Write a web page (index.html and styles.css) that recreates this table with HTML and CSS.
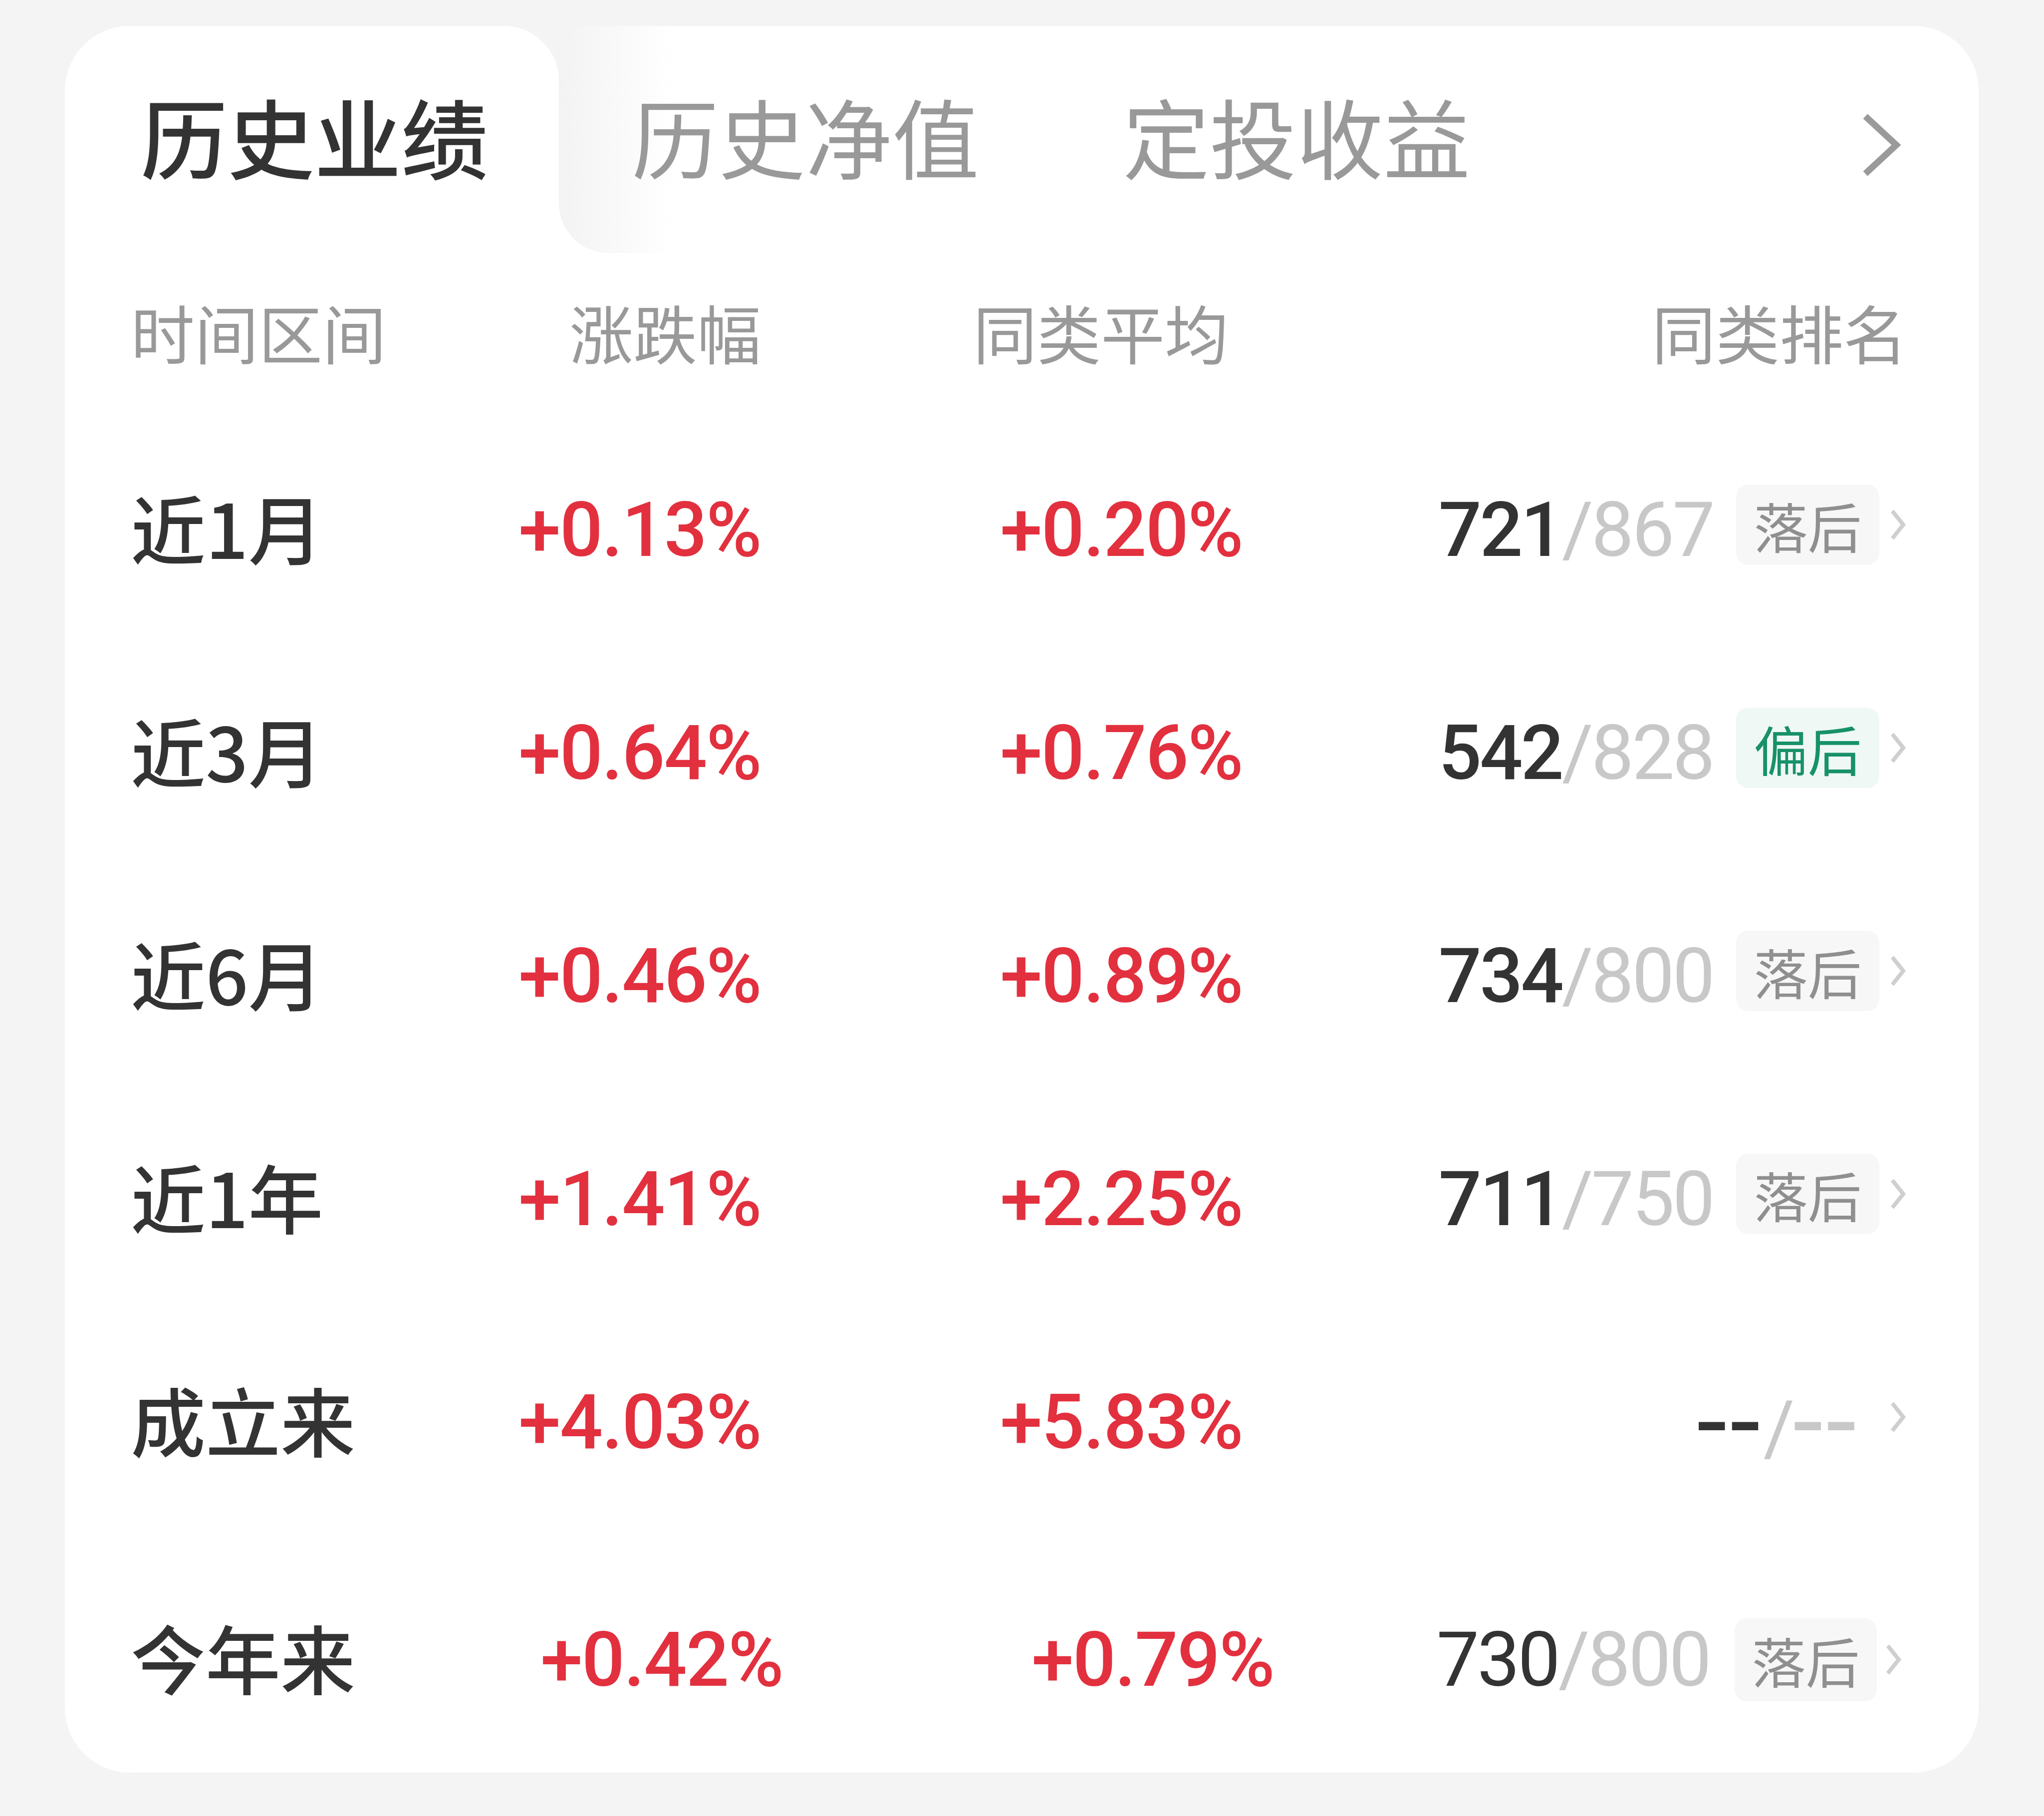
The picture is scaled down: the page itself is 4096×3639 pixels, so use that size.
FILE: index.html
```html
<!DOCTYPE html>
<html lang="zh-CN">
<head>
<meta charset="utf-8">
<title>历史业绩</title>
<link rel="stylesheet" href="styles.css">
</head>
<body>
<div class="card">
  <div class="tabs">
    <div class="tab tab-active"><span class="tab-text">历史业绩</span></div>
    <div class="tab-rest">
      <div class="tab tab-text">历史净值</div>
      <div class="tab tab-text">定投收益</div>
      <svg class="tab-more" width="82" height="131" viewBox="0 0 82 131"><polyline points="8,8 70,65.5 8,123" fill="none" stroke="#9a9a9a" stroke-width="13"/></svg>
    </div>
  </div>
  <div class="table">
    <div class="row row-head">
      <div class="c1">时间区间</div>
      <div class="c2">涨跌幅</div>
      <div class="c3 head-avg">同类平均</div>
      <div class="c4">同类排名</div>
    </div>
    <div class="row">
      <div class="c1 label">近1月</div>
      <div class="c2 up">+0.13%</div>
      <div class="c3 up">+0.20%</div>
      <div class="c4"><span class="rank"><span class="mine">721</span><span class="total">/867</span></span><span class="badge">落后</span><svg class="more" width="37" height="67" viewBox="0 0 37 67"><polyline points="7,6 29,33.5 7,61" fill="none" stroke="#cfcfcf" stroke-width="8"/></svg></div>
    </div>
    <div class="row">
      <div class="c1 label">近3月</div>
      <div class="c2 up">+0.64%</div>
      <div class="c3 up">+0.76%</div>
      <div class="c4"><span class="rank"><span class="mine">542</span><span class="total">/828</span></span><span class="badge badge-green">偏后</span><svg class="more" width="37" height="67" viewBox="0 0 37 67"><polyline points="7,6 29,33.5 7,61" fill="none" stroke="#cfcfcf" stroke-width="8"/></svg></div>
    </div>
    <div class="row">
      <div class="c1 label">近6月</div>
      <div class="c2 up">+0.46%</div>
      <div class="c3 up">+0.89%</div>
      <div class="c4"><span class="rank"><span class="mine">734</span><span class="total">/800</span></span><span class="badge">落后</span><svg class="more" width="37" height="67" viewBox="0 0 37 67"><polyline points="7,6 29,33.5 7,61" fill="none" stroke="#cfcfcf" stroke-width="8"/></svg></div>
    </div>
    <div class="row">
      <div class="c1 label">近1年</div>
      <div class="c2 up">+1.41%</div>
      <div class="c3 up">+2.25%</div>
      <div class="c4"><span class="rank"><span class="mine">711</span><span class="total">/750</span></span><span class="badge">落后</span><svg class="more" width="37" height="67" viewBox="0 0 37 67"><polyline points="7,6 29,33.5 7,61" fill="none" stroke="#cfcfcf" stroke-width="8"/></svg></div>
    </div>
    <div class="row">
      <div class="c1 label">成立来</div>
      <div class="c2 up">+4.03%</div>
      <div class="c3 up">+5.83%</div>
      <div class="c4"><span class="rank rank-empty"><span class="mine dash">--</span><span class="total">/<span class="dash">--</span></span></span><svg class="more" width="37" height="67" viewBox="0 0 37 67"><polyline points="7,6 29,33.5 7,61" fill="none" stroke="#cfcfcf" stroke-width="8"/></svg></div>
    </div>
    <div class="row row-last">
      <div class="c1 label">今年来</div>
      <div class="c2 up">+0.42%</div>
      <div class="c3 up">+0.79%</div>
      <div class="c4"><span class="rank"><span class="mine mine-light">730</span><span class="total">/800</span></span><span class="badge">落后</span><svg class="more" width="37" height="67" viewBox="0 0 37 67"><polyline points="7,6 29,33.5 7,61" fill="none" stroke="#cfcfcf" stroke-width="8"/></svg></div>
    </div>
  </div>
</div>
</body>
</html>
```

FILE: styles.css
```css
html, body {
  margin: 0;
  background: #f4f4f4;
}

body {
  padding: 52px 131px 87px 130px;
  font-family: "Noto Sans CJK SC", "Noto Sans", sans-serif;
}

.card {
  background: #fff;
  border-radius: 130px;
  overflow: hidden;
  height: 3500px;
  display: flex;
  flex-direction: column;
}

/* ---------- tabs ---------- */
.tabs {
  flex: none;
  display: flex;
  height: 455px;
  background: linear-gradient(#f4f4f4, #f4f4f4) top left / 100% 50% no-repeat, #fff;
}

.tab {
  font-size: 174px;
  line-height: 1;
  color: #999;
  font-weight: 400;
  white-space: nowrap;
}

.tab-text {
  padding-bottom: 20px;
}

.tab-active {
  width: 990px;
  box-sizing: border-box;
  padding-left: 152px;
  display: flex;
  align-items: center;
  background: #fff;
  border-top-right-radius: 110px;
  color: #333;
  font-weight: 500;
}

.tab-rest {
  flex: 1;
  display: flex;
  align-items: center;
  gap: 288px;
  padding-left: 146px;
  background: linear-gradient(90deg, #f3f3f3 0, #fff 230px);
  border-bottom-left-radius: 100px;
}

.tab-more {
  margin-left: auto;
  margin-right: 153px;
  margin-top: 21px;
}

/* ---------- table ---------- */
.table {
  flex: 1;
  display: flex;
  flex-direction: column;
  padding: 0 143px 0 132px;
}

.row {
  flex: none;
  display: flex;
  align-items: center;
  height: 447px;
}

.row-head {
  height: 331px;
  font-size: 128px;
  line-height: 1;
  color: #999;
}

.row-head > div {
  padding-bottom: 16px;
}

.c1 { width: 738px; }
.c2 { width: 525px; text-align: right; }
.c3 { width: 965px; text-align: right; }
.c4 {
  flex: 1;
  display: flex;
  justify-content: flex-end;
  align-items: center;
}

.head-avg { box-sizing: border-box; padding-right: 28px; }

.label {
  font-size: 150px;
  line-height: 1;
  color: #333;
  font-weight: 500;
  padding-bottom: 14px;
}

.up {
  font-family: Roboto, "Liberation Sans", sans-serif;
  font-size: 152px;
  line-height: 1;
  font-weight: 500;
  color: #e2303e;
  letter-spacing: -2px;
}

.rank {
  font-family: Roboto, "Liberation Sans", sans-serif;
  font-size: 152px;
  line-height: 1;
  letter-spacing: -4px;
  white-space: nowrap;
}

.mine { color: #333; font-weight: 500; }
.mine-light { font-weight: 400; }
.total { color: #c8c8c8; font-weight: 400; }

.dash {
  font-size: 220px;
  font-weight: 400;
  letter-spacing: 6px;
  vertical-align: -10px;
}

.rank-empty { margin-right: 40px; }

.badge {
  flex: none;
  margin-left: 46px;
  margin-bottom: 20px;
  width: 287px;
  height: 161px;
  border-radius: 24px;
  background: #f7f7f7;
  color: #8f8f8f;
  font-size: 108px;
  line-height: 1;
  display: flex;
  align-items: center;
  justify-content: center;
}

.badge-green {
  background: #eff8f4;
  color: #17916a;
}

.more {
  flex: none;
  margin-left: 19px;
  margin-bottom: 20px;
}

/* last row sits slightly differently */
.row-last {
  height: 479px;
  box-sizing: border-box;
  padding-top: 26px;
}

.row-last .c2 { width: 569px; }
.row-last .c3 { width: 984px; }
.row-last .c4 { padding-right: 9px; }
.row-last .badge { margin-bottom: 0; width: 285px; height: 166px; margin-left: 50px; }
.row-last .more { margin-bottom: 0; margin-left: 15px; }
```
